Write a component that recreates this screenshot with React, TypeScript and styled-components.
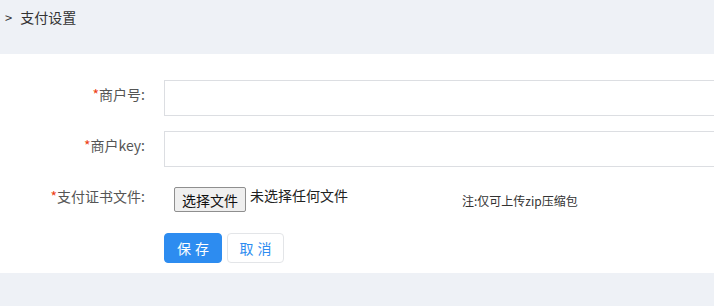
import React from 'react';
import styled, { createGlobalStyle } from 'styled-components';

const GlobalStyle = createGlobalStyle`
  html, body {
    margin: 0;
    padding: 0;
    background: #eef1f6;
    font-family: "Noto Sans CJK SC", "Noto Sans", "Liberation Sans", sans-serif;
  }
`;

const Page = styled.div`
  width: 714px;
  height: 306px;
  background: #eef1f6;
  overflow: hidden;
`;

const Header = styled.div`
  height: 54px;
  padding: 7px 0 0 5px;
  box-sizing: border-box;
  font-size: 14px;
  color: #333;
  line-height: 20px;

  .arrow {
    font-size: 13px;
    margin-right: 8px;
  }
`;

const Panel = styled.div`
  background: #fff;
  height: 219px;
  padding-top: 26px;
  box-sizing: border-box;
`;

const Row = styled.div`
  display: flex;
  align-items: flex-start;
  height: 36px;
  margin-bottom: 15px;
`;

const Label = styled.label`
  width: 145px;
  padding-right: 19px;
  padding-top: 4px;
  line-height: 20px;
  text-align: right;
  font-size: 14px;
  color: #555;

  .req {
    color: #ed4014;
  }
`;

const TextInput = styled.input`
  flex: 1;
  height: 36px;
  box-sizing: border-box;
  border: 1px solid #dcdee2;
  border-right: none;
  outline: none;
  padding: 0 8px;
  font-size: 14px;
`;

const FileArea = styled.div`
  display: flex;
  align-items: flex-start;
  padding: 5px 0 0 10px;
  font-size: 14px;
  line-height: 20px;
  color: #222;
`;

const FileButton = styled.span`
  display: inline-flex;
  align-items: center;
  height: 25px;
  padding: 0 7px;
  border: 1px solid #8f8f8f;
  border-radius: 2px;
  background: #efefef;
  color: #111;
  margin-right: 4px;
  box-sizing: border-box;
`;

const FileName = styled.span`
  margin-top: -2px;
`;

const Note = styled.span`
  margin-left: 114px;
  margin-top: 4px;
  font-size: 12px;
  color: #333;
`;

const Actions = styled.div`
  display: flex;
  gap: 5px;
  padding-left: 164px;
`;

const Btn = styled.button<{ $primary?: boolean }>`
  height: 30px;
  width: ${(p) => (p.$primary ? 58 : 57)}px;
  border-radius: 4px;
  font-family: inherit;
  font-size: 14px;
  letter-spacing: 4px;
  text-indent: 4px;
  cursor: pointer;
  border: 1px solid ${(p) => (p.$primary ? '#2d8cf0' : '#e3e5e8')};
  background: ${(p) => (p.$primary ? '#2d8cf0' : '#fff')};
  color: ${(p) => (p.$primary ? '#fff' : '#2d8cf0')};
`;

export default function App() {
  return (
    <Page>
      <GlobalStyle />
      <Header>
        <span className='arrow'>&gt;</span>支付设置
      </Header>
      <Panel>
        <Row>
          <Label>
            <span className='req'>*</span>商户号:
          </Label>
          <TextInput />
        </Row>
        <Row>
          <Label>
            <span className='req'>*</span>商户key:
          </Label>
          <TextInput />
        </Row>
        <Row>
          <Label>
            <span className='req'>*</span>支付证书文件:
          </Label>
          <FileArea>
            <FileButton>选择文件</FileButton>
            <FileName>未选择任何文件</FileName>
            <Note>注:仅可上传zip压缩包</Note>
          </FileArea>
        </Row>
        <Actions>
          <Btn $primary>保存</Btn>
          <Btn>取消</Btn>
        </Actions>
      </Panel>
    </Page>
  );
}
